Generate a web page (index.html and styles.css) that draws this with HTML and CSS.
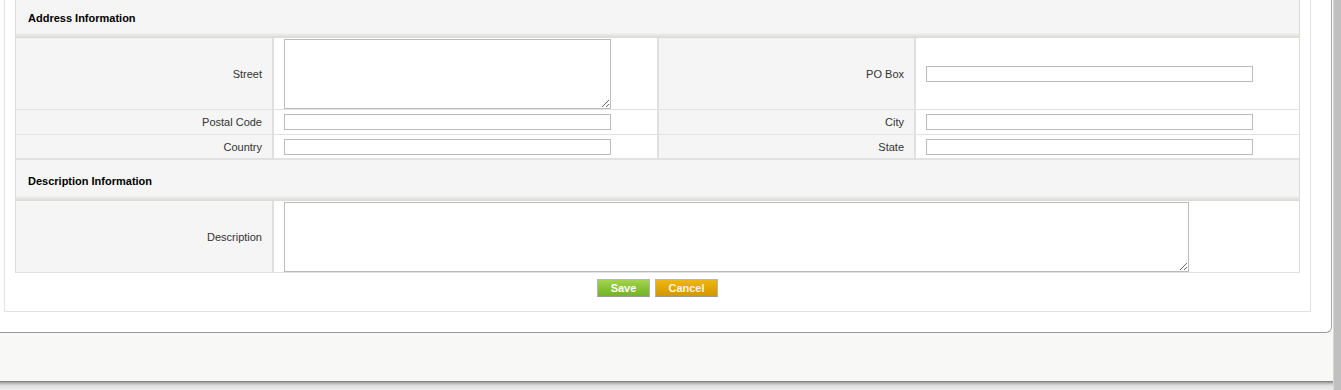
FILE: index.html
```html
<!DOCTYPE html>
<html>
  <head>
    <title>Edit Account</title>
    <meta name="viewport" content="width=device-width, initial-scale=1">
    <link rel="stylesheet" href="styles.css">
  </head>
  <body>
    <div class="page">
      <div class="main">
        <div class="panel">
          <div class="box">
            <!-- address block -->
            <div class="block">
              <div class="sec-head">Address Information</div>
              <div class="row tall">
                <div class="lbl">Street</div>
                <div class="fld"><textarea class="ta"></textarea></div>
                <div class="lbl">PO Box</div>
                <div class="fld last"><input type="text" class="inp"></div>
              </div>
              <div class="row">
                <div class="lbl">Postal Code</div>
                <div class="fld"><input type="text" class="inp"></div>
                <div class="lbl">City</div>
                <div class="fld last"><input type="text" class="inp"></div>
              </div>
              <div class="row end">
                <div class="lbl">Country</div>
                <div class="fld"><input type="text" class="inp"></div>
                <div class="lbl">State</div>
                <div class="fld last"><input type="text" class="inp"></div>
              </div>
            </div>
            <!-- description block -->
            <div class="block">
              <div class="sec-head">Description Information</div>
              <div class="row wide tall">
                <div class="lbl">Description</div>
                <div class="fld last"><textarea class="ta big"></textarea></div>
              </div>
            </div>
            <div class="actions">
              <button class="btn save">Save</button>
              <button class="btn cancel">Cancel</button>
            </div>
          </div>
        </div>
        <div class="foot"></div>
        <div class="shade"></div>
      </div>
      <div class="scroll"></div>
    </div>
  </body>
</html>
```
FILE: styles.css
```css
html, body{
  margin:0;
  padding:0;
  height:390px;
  overflow:hidden;
  }
body{
  font-family:"Liberation Sans", Arial, sans-serif;
  font-size:11px;
  color:#333;
  background:#f8f8f6;
}
.page{
  display:flex;
  height:390px;
}
.main{
  width:1333px;
  display:flex;
  flex-direction:column;
  background:#f8f8f6;
  }
.scroll{
  width:8px;
  background:#c0c0c0;
  border-left:1px solid #d6d6d6;
  box-sizing:border-box;
  }
.panel{
  width:1332px;
  box-sizing:border-box;
  background:#fff;
  padding:0 20px 20px 4px;
  border-right:1px solid #a9a9a9;
  border-bottom:1px solid #999;
  border-bottom-right-radius:6px;
  }
.box{
  margin-top:-3px;
  border:1px solid #e2e2e2;
  border-top:none;
  padding:0 10px 14px 10px;
  }
.block{
  border-left:1px solid #dcdcdc;
  border-right:1px solid #dcdcdc;
  }
.sec-head{
  height:41px;
  box-sizing:border-box;
  padding:14px 0 0 12px;
  line-height:14px;
  font-weight:bold;
  color:#000;
  background:linear-gradient(to bottom, #f5f5f5 0, #f5f5f5 36px, #ecece8 37px, #e2e2de 39px, #dadad5 41px);
  }
.row{
  display:grid;
  grid-template-columns:258px 385px 257px 1fr;
  height:25px;
  border-bottom:1px solid #e2e2e2;
  box-sizing:border-box;
  }
.row.tall{
  height:72px;
  }
.row.end{
  height:25px;
  border-bottom-width:2px;
  }
.row.wide{
  grid-template-columns:258px 1fr;
  border-bottom-width:1px;
  }
.lbl{
  background:#f5f5f5;
  border-right:2px solid #e0e0e0;
  text-align:right;
  padding-right:10px;
  display:flex;
  align-items:center;
  justify-content:flex-end;
  }
.fld{
  background:#fff;
  border-right:2px solid #e0e0e0;
  padding-left:10px;
  display:flex;
  align-items:center;
  }
.fld.last{
  border-right:none;
  }
.row.tall .fld{
  align-items:flex-start;
  padding-top:1px;
  }
.row.tall .fld.last{
  align-items:center;
  padding-top:0;
  }
.row.wide .fld.last{
  align-items:flex-start;
  padding-top:1px;
  }
.inp{
  width:327px;
  height:16px;
  box-sizing:border-box;
  border:1px solid #bbb;
  margin:0;
  padding:0 2px;
  font-size:11px;
  }
.ta{
  width:327px;
  height:70px;
  box-sizing:border-box;
  border:1px solid #bbb;
  margin:0;
  padding:2px;
  font-family:"Liberation Sans", Arial, sans-serif;
  font-size:11px;
  display:block;
  }
.ta.big{
  width:905px;
  }
.actions{
  display:flex;
  justify-content:center;
  gap:5px;
  margin-top:6px;
  }
.btn{
  height:18px;
  padding:0;
  margin:0;
  border:1px solid #b4b4b4;
  border-bottom-color:#9a9a9a;
  font-family:"Liberation Sans", Arial, sans-serif;
  font-size:11px;
  font-weight:bold;
  color:#fff;
  line-height:15px;
  }
.save{
  width:53px;
  background:linear-gradient(to bottom, #a3d44e, #82bf33 60%, #76b32a);
  }
.cancel{
  width:63px;
  color:#fdf6dc;
  background:linear-gradient(to bottom, #edb612, #dea300 60%, #d39800);
  }
.foot{
  height:48px;
  }
.shade{
  height:9px;
  background:linear-gradient(to bottom, #707070 0, #9a9a9a 1px, #c8c8c8 3px, #e2e2e2 5px, #ececec 9px);
  }
```
